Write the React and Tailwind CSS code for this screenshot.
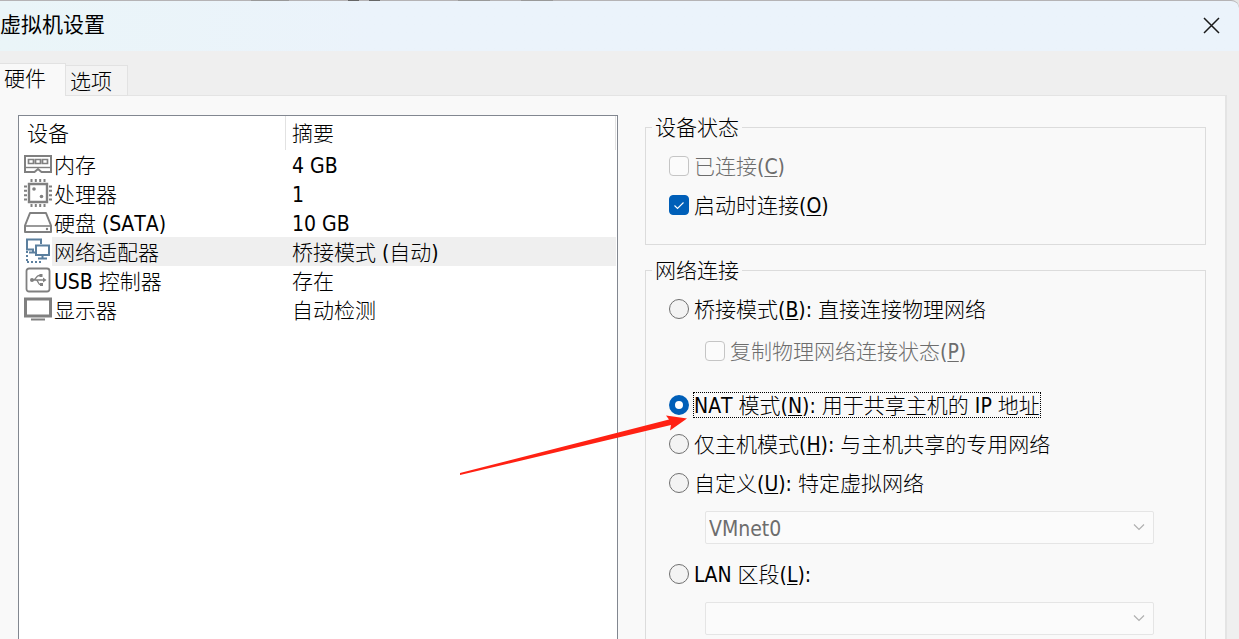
import React, { useState } from 'react';

const MemoryIcon = () => (
  <svg width="28" height="28" viewBox="0 0 28 28" fill="none" stroke="#808080">
    <path d="M1 6H27V22H17.5L14 19L10.5 22H1Z" strokeWidth="2" />
    <path d="M1 17.5H27" strokeWidth="1.4" />
    <path d="M4.5 9.5H9.5V13.5H4.5ZM11.5 9.5H16.5V13.5H11.5ZM18.5 9.5H23.5V13.5H18.5Z" strokeWidth="1.7" />
  </svg>
);

const CpuIcon = () => (
  <svg width="28" height="28" viewBox="0 0 28 28" fill="none" stroke="#808080">
    <path d="M5 5H23V23H5Z" strokeWidth="2.4" />
    <path d="M7.5 0V3M11.8 0V3M16.2 0V3M20.5 0V3M7.5 25V28M11.8 25V28M16.2 25V28M20.5 25V28" strokeWidth="2" />
    <path d="M0 7.5H3M0 11.8H3M0 16.2H3M0 20.5H3M25 7.5H28M25 11.8H28M25 16.2H28M25 20.5H28" strokeWidth="2" />
    <circle cx="10" cy="10" r="1.8" fill="#808080" stroke="none" />
    <circle cx="17.5" cy="17.5" r="1.8" fill="#808080" stroke="none" />
  </svg>
);

const DiskIcon = () => (
  <svg width="28" height="28" viewBox="0 0 28 28" fill="none" stroke="#808080">
    <path d="M6 5H22L27 17.5V24H1V17.5Z" strokeWidth="2" strokeLinejoin="round" />
    <path d="M1 18H27" strokeWidth="1.6" />
    <circle cx="23" cy="21" r="1.2" fill="#808080" stroke="none" />
  </svg>
);

const NetworkIcon = () => (
  <svg width="28" height="28" viewBox="0 0 28 28" fill="none" stroke="#5b7f9e">
    <path d="M10 12.5H3V2.5H17V7" strokeWidth="2" />
    <path d="M9 12.5V15M5 15.5H13" strokeWidth="2" />
    <path d="M12 8.5H25V18H12Z" strokeWidth="2" />
    <path d="M18.5 18V21M14 21.5H23" strokeWidth="2" />
    <path d="M3 14V24M3 25H18" strokeWidth="2" strokeDasharray="2 2" />
  </svg>
);

const UsbIcon = () => (
  <svg width="28" height="28" viewBox="0 0 28 28" fill="none" stroke="#808080">
    <rect x="2.5" y="2.5" width="23" height="23" rx="2.5" strokeWidth="1.8" />
    <path d="M8 14H20M9.5 14C12 14 12 9.5 15 9.5H17M12 14C14.5 14 14 18.5 16 18.5H18" strokeWidth="1.3" />
    <circle cx="8" cy="14" r="2" fill="#808080" stroke="none" />
    <path d="M19 11.5V16.5L22.5 14Z" fill="#808080" stroke="none" />
    <path d="M15.5 8H18.5V11H15.5ZM16 17H19V20H16Z" fill="#808080" stroke="none" />
  </svg>
);

const DisplayIcon = () => (
  <svg width="28" height="28" viewBox="0 0 28 28" fill="none" stroke="#808080">
    <path d="M1.5 4H26.5V21H1.5Z" strokeWidth="3" />
    <path d="M7 24.5H21" strokeWidth="2" />
  </svg>
);

const devices = [
  { id: 'memory', icon: MemoryIcon, name: '内存', summary: '4 GB' },
  { id: 'cpu', icon: CpuIcon, name: '处理器', summary: '1' },
  { id: 'disk', icon: DiskIcon, name: '硬盘 (SATA)', summary: '10 GB' },
  { id: 'network', icon: NetworkIcon, name: '网络适配器', summary: '桥接模式 (自动)' },
  { id: 'usb', icon: UsbIcon, name: 'USB 控制器', summary: '存在' },
  { id: 'display', icon: DisplayIcon, name: '显示器', summary: '自动检测' },
];

const DeviceList = () => {
  const [selected, setSelected] = useState('network');

  return (
    <div className="border border-b-0 border-[#828790] bg-white pr-px">
      <table className="w-full table-fixed border-separate border-spacing-0 text-left">
        <colgroup>
          <col className="w-[33px]" />
          <col className="w-[234px]" />
          <col />
        </colgroup>
        <thead>
          <tr className="h-[34px]">
            <th colSpan={2} className="border-r border-[#e2e2e2] p-0 pt-0.5 pl-2 font-light">设备</th>
            <th className="border-r border-[#e2e2e2] p-0 pt-0.5 pl-1.5 font-light">摘要</th>
          </tr>
        </thead>
        <tbody>
          {devices.map(({ id, icon: Icon, name, summary }) => {
            const rowBg = id === selected ? 'bg-[#efefef]' : '';
            return (
              <tr key={id} className="h-[29px]" onClick={() => setSelected(id)}>
                <td className="p-0 pl-[5px] align-top"><Icon /></td>
                <td className={`p-0 pt-0.5 pl-0.5 ${rowBg}`}>{name}</td>
                <td className={`p-0 pt-0.5 pl-1.5 ${rowBg}`}>{summary}</td>
              </tr>
            );
          })}
        </tbody>
      </table>
    </div>
  );
};

const CheckOption = ({ children, className = '', ...props }) => (
  <label className={`flex h-[26px] items-center gap-1 ${props.disabled ? 'text-[#6d6d6d]' : ''} ${className}`}>
    <span className="relative size-5 shrink-0">
      <input
        type="checkbox"
        className="peer block size-5 appearance-none rounded border border-[#8a8a8a] bg-[#fbfbfb] checked:border-[#005fb8] checked:bg-[#005fb8] disabled:border-[#c5c5c5]"
        {...props}
      />
      <svg className="pointer-events-none absolute inset-0 hidden peer-checked:block" width="20" height="20" fill="none" stroke="white">
        <path d="M5.5 10.5L8.5 13.5L14.5 7.5" strokeWidth="1.1" />
      </svg>
    </span>
    <span className="border border-transparent pt-0.5 leading-[22px]">{children}</span>
  </label>
);

const RadioOption = ({ value, mode, onSelect, className = '', children }) => (
  <label className={`flex h-[26px] items-center gap-1 ${className}`}>
    <input
      type="radio"
      name="network-mode"
      value={value}
      checked={mode === value}
      onChange={() => onSelect(value)}
      className="size-5 shrink-0 appearance-none rounded-full border border-[#707070] bg-[#f3f3f3] checked:border-6 checked:border-[#005fb8] checked:bg-white"
    />
    <span className={`border border-dotted pt-0.5 leading-[22px] ${mode === value ? 'border-black' : 'border-transparent'}`}>
      {children}
    </span>
  </label>
);

const Dropdown = ({ label, options }) => (
  <div className="relative mt-[15px] mr-7 ml-9">
    <select
      disabled
      aria-label={label}
      className="block h-[33px] w-full appearance-none rounded-xs border border-[#e5e5e5] bg-[#fbfbfb] px-[3px] pt-0.5 text-[#6d6d6d] opacity-100"
    >
      {options.map((option) => (
        <option key={option}>{option}</option>
      ))}
    </select>
    <svg className="pointer-events-none absolute top-3 right-[9px]" width="12" height="9" fill="none" stroke="#b0b0b0">
      <path d="M1 1.5L6 6.5L11 1.5" strokeWidth="1.2" />
    </svg>
  </div>
);

const Group = ({ title, className = '', children }) => (
  <fieldset className={`border border-[#dcdcdc] px-[23px] pt-3.5 ${className}`}>
    <legend className="-ml-[17px] px-[3px] pt-0.5 leading-[22px]">{title}</legend>
    {children}
  </fieldset>
);

const Key = ({ children }) => <u className="decoration-1 underline-offset-2">{children}</u>;

const App = () => {
  const [connectAtPowerOn, setConnectAtPowerOn] = useState(true);
  const [mode, setMode] = useState('nat');

  return (
    <div className="relative flex h-screen flex-col overflow-hidden bg-[#e6e6e6] font-['DejaVu_Sans_Condensed','Noto_Sans_CJK_SC',sans-serif] text-[21px] leading-6 font-light text-black [font-kerning:none]">
      {/* Title bar */}
      <header className="flex h-[51px] shrink-0 items-center justify-between rounded-tr-lg border-t border-[#b5b3b5] bg-linear-to-r from-[#eaf5f8] to-[#ebf3fb] to-30% pr-[18px] pb-0.5">
        <h1 className="font-normal">虚拟机设置</h1>
        <button type="button" aria-label="关闭" className="size-[19px]">
          <svg width="19" height="19" fill="none" stroke="#1a1a1a">
            <path d="M2 2L17 17M17 2L2 17" strokeWidth="1.5" />
          </svg>
        </button>
      </header>

      {/* Edge of the window behind the dialog */}
      <svg className="pointer-events-none absolute top-0 left-0" width="560" height="1" fill="none">
        <path d="M348 0.5H359M369 0.5H380" stroke="#666666" />
        <path d="M251 0.5H289M458 0.5H490M521 0.5H553" stroke="#999999" />
      </svg>

      <div className="flex min-h-0 flex-1 flex-col bg-[#efefef] pt-3 pr-3">
        {/* Tabs */}
        <div role="tablist" className="z-10 -mb-px flex items-end">
          <button type="button" role="tab" aria-selected="true" className="h-[33px] w-[66px] border-t border-r border-[#e2e2e2] bg-[#f9f9f9] pb-0.5 pl-1 text-left">
            硬件
          </button>
          <button type="button" role="tab" aria-selected="false" className="h-[31px] w-[62px] border border-l-0 border-[#e2e2e2] bg-[#f3f3f3] pt-0.5 pl-1 text-left">
            选项
          </button>
        </div>

        <main className="grid flex-1 grid-cols-[600fr_561fr] gap-[27px] border-t border-r-2 border-[#e4e4e4] bg-[#f9f9f9] pt-[19px] pr-[19px] pl-[18px]">
          <DeviceList />

          <div className="flex flex-col gap-[13px]">
            <Group title="设备状态" className="pb-[26px]">
              <CheckOption disabled>已连接(<Key>C</Key>)</CheckOption>
              <CheckOption
                className="mt-[13px]"
                checked={connectAtPowerOn}
                onChange={(e) => setConnectAtPowerOn(e.target.checked)}
              >
                启动时连接(<Key>O</Key>)
              </CheckOption>
            </Group>

            <Group title="网络连接" className="pb-12">
              <RadioOption value="bridged" mode={mode} onSelect={setMode}>
                桥接模式(<Key>B</Key>): 直接连接物理网络
              </RadioOption>
              <CheckOption disabled className="mt-4 ml-9">复制物理网络连接状态(<Key>P</Key>)</CheckOption>
              <RadioOption value="nat" mode={mode} onSelect={setMode} className="mt-7">
                NAT 模式(<Key>N</Key>): 用于共享主机的 IP 地址
              </RadioOption>
              <RadioOption value="host" mode={mode} onSelect={setMode} className="mt-[13px]">
                仅主机模式(<Key>H</Key>): 与主机共享的专用网络
              </RadioOption>
              <RadioOption value="custom" mode={mode} onSelect={setMode} className="mt-[13px]">
                自定义(<Key>U</Key>): 特定虚拟网络
              </RadioOption>
              <Dropdown label="特定虚拟网络" options={['VMnet0']} />
              <RadioOption value="lan" mode={mode} onSelect={setMode} className="mt-[17px]">
                LAN 区段(<Key>L</Key>):
              </RadioOption>
              <Dropdown label="LAN 区段" options={['']} />
            </Group>
          </div>
        </main>
      </div>

      {/* Arrow pointing at the NAT option */}
      <svg className="pointer-events-none absolute top-[412px] left-[458px] z-20" width="232" height="66" viewBox="458 412 232 66" fill="#ff2113">
        <path d="M460 473L669 419.5L666 415.5L687 418.5L670 430.5L671 425L460 475Z" />
      </svg>
    </div>
  );
};

export default App;
